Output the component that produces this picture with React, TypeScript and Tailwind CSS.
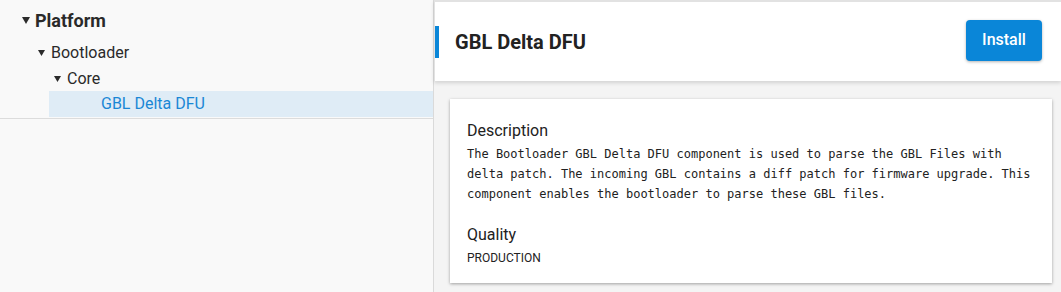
import React from 'react';

function Caret({ w, h }: { w: number; h: number }) {
  return (
    <svg width={w} height={h} viewBox={`0 0 ${w} ${h}`} className="shrink-0">
      <polygon points={`0,0 ${w},0 ${w / 2},${h}`} fill="#2b2b2b" />
    </svg>
  );
}

export default function App() {
  const description =
    'The Bootloader GBL Delta DFU component is used to parse the GBL Files with delta patch. The incoming GBL contains a diff patch for firmware upgrade. This component enables the bootloader to parse these GBL files.';

  return (
    <div className="flex w-[1061px] h-[292px] overflow-hidden font-['Roboto',sans-serif] text-[#222]">
      {/* tree */}
      <div className="w-[434px] shrink-0 bg-[#f9f9f9] border-r border-[#dadada] flex flex-col">
        <div className="border-b border-[#dcdcdc] pb-[1px]">
          <div className="h-[40px] flex items-center pl-[22px] gap-[5px]">
            <Caret w={8} h={7} />
            <span className="text-[18px] font-bold text-[#2a2a2a]">Platform</span>
          </div>
          <div className="h-[26px] flex items-center pl-[38px] gap-[6px]">
            <Caret w={7} h={6} />
            <span className="text-[16px] text-[#2a2a2a]">Bootloader</span>
          </div>
          <div className="h-[25px] flex items-center pl-[54px] gap-[6px]">
            <Caret w={7} h={6} />
            <span className="text-[16px] text-[#2a2a2a]">Core</span>
          </div>
          <div className="ml-[49px] h-[26px] flex items-center pl-[52px] bg-[#dfecf6]">
            <span className="text-[16px] text-[#1a87d5]">GBL Delta DFU</span>
          </div>
        </div>
      </div>

      {/* detail */}
      <div className="flex-1 bg-[#f4f4f4] flex flex-col">
        <div className="h-[81px] shrink-0 bg-white border-t-2 border-l border-[#e2e2e2] shadow-[0_2px_4px_rgba(0,0,0,0.14)] flex items-center relative z-10">
          <div className="w-[4px] h-[32px] bg-[#0a86d8]" />
          <h1 className="ml-[16px] text-[20px] font-bold text-[#222]">GBL Delta DFU</h1>
          <button className="ml-auto mr-[19px] mb-[3px] w-[76px] h-[41px] rounded-[4px] bg-[#0a86d8] text-white text-[16px] font-medium shadow-[0_1px_3px_rgba(0,0,0,0.3)]">
            Install
          </button>
        </div>

        <div className="mt-[18px] ml-[16px] mr-[9px] bg-white shadow-[0_1px_3px_rgba(0,0,0,0.35)] pl-[17px] pr-[20px] pt-[20px] pb-[17px]">
          <div className="text-[16px] leading-[24px] text-[#222]">Description</div>
          <p className="mt-[1px] font-['DejaVu_Sans_Mono',monospace] text-[12px] leading-[20px] text-[#222]">
            {description}
          </p>
          <div className="mt-[19px] text-[16px] leading-[24px] text-[#222]">Quality</div>
          <div className="mt-[3px] text-[12px] leading-[16px] text-[#222]">PRODUCTION</div>
        </div>
      </div>
    </div>
  );
}
